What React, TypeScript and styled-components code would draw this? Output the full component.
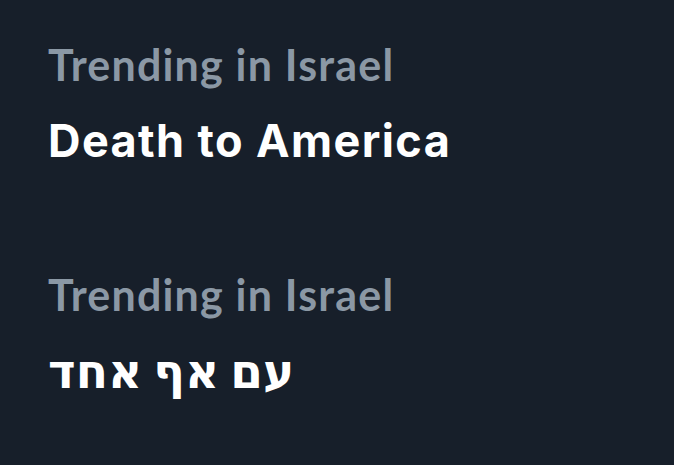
import React from "react";
import styled, { createGlobalStyle } from "styled-components";

const GlobalStyle = createGlobalStyle`
  html, body {
    margin: 0;
    padding: 0;
    background: #171f2a;
  }
`;

const trends = [
  { label: "Trending in Israel", title: "Death to America", rtl: false },
  { label: "Trending in Israel", title: "עם אף אחד", rtl: true },
];

const App = () => (
  <>
    <GlobalStyle />
    <Page>
      {trends.map((t, i) => (
        <Trend key={i}>
          <Label>{t.label}</Label>
          <Title dir={t.rtl ? "rtl" : "ltr"} $rtl={t.rtl}>
            {t.title}
          </Title>
        </Trend>
      ))}
    </Page>
  </>
);

export default App;

const Page = styled.div`
  width: 674px;
  height: 465px;
  box-sizing: border-box;
  padding: 39px 0 0 48px;
  display: flex;
  flex-direction: column;
  gap: 100px;
  background: #171f2a;
`;

const Trend = styled.div`
  display: flex;
  flex-direction: column;
  align-items: flex-start;
  gap: 22px;
`;

const Label = styled.div`
  font-family: Lato, "Liberation Sans", sans-serif;
  font-weight: 700;
  font-size: 43px;
  line-height: 52px;
  letter-spacing: 1.2px;
  color: #8b98a5;
`;

const Title = styled.div<{ $rtl: boolean }>`
  font-family: Inter, "DejaVu Sans", sans-serif;
  font-weight: 700;
  font-size: ${(p) => (p.$rtl ? "47px" : "45px")};
  line-height: 56px;
  letter-spacing: ${(p) => (p.$rtl ? "0" : "1.4px")};
  color: #ffffff;
`;
